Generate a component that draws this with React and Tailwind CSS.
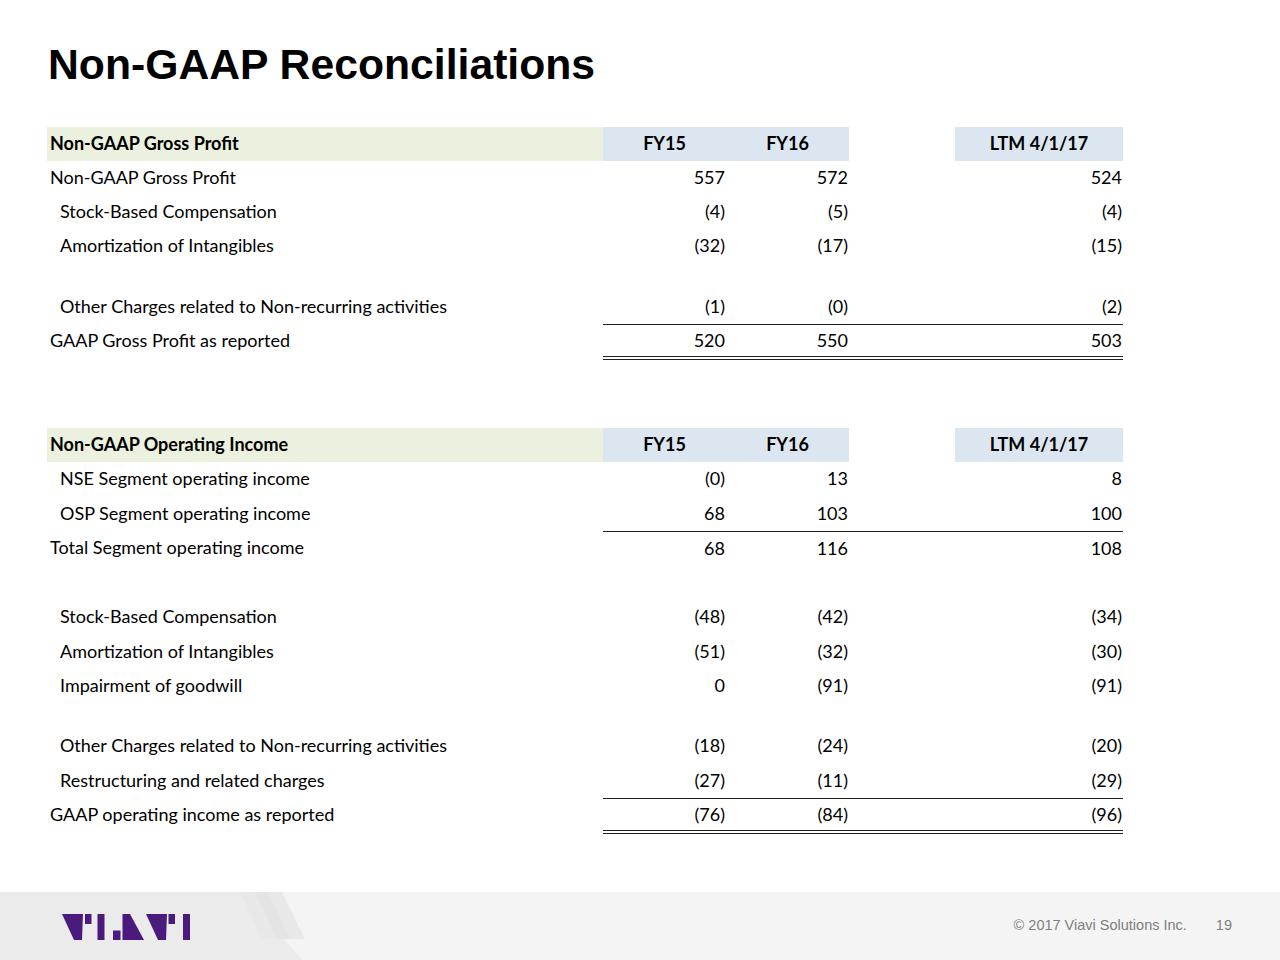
import React from "react";

const T1 = [
  { type: "row", label: "Non-GAAP Gross Profit", indent: false, v: ["557", "572", "524"] },
  { type: "row", label: "Stock-Based Compensation", indent: true, v: ["(4)", "(5)", "(4)"] },
  { type: "row", label: "Amortization of Intangibles", indent: true, v: ["(32)", "(17)", "(15)"] },
  { type: "spacer", h: "h-[27px]" },
  { type: "row", label: "Other Charges related to Non-recurring activities", indent: true, v: ["(1)", "(0)", "(2)"] },
  { type: "row", label: "GAAP Gross Profit as reported", indent: false, v: ["520", "550", "503"], top: true, dbl: true },
];

const T2 = [
  { type: "row", label: "NSE Segment operating income", indent: true, v: ["(0)", "13", "8"] },
  { type: "row", label: "OSP Segment operating income", indent: true, v: ["68", "103", "100"] },
  { type: "row", label: "Total Segment operating income", indent: false, v: ["68", "116", "108"], top: true },
  { type: "spacer", h: "h-[34.5px]" },
  { type: "row", label: "Stock-Based Compensation", indent: true, v: ["(48)", "(42)", "(34)"] },
  { type: "row", label: "Amortization of Intangibles", indent: true, v: ["(51)", "(32)", "(30)"] },
  { type: "row", label: "Impairment of goodwill", indent: true, v: ["0", "(91)", "(91)"] },
  { type: "spacer", h: "h-[25.5px]" },
  { type: "row", label: "Other Charges related to Non-recurring activities", indent: true, v: ["(18)", "(24)", "(20)"] },
  { type: "row", label: "Restructuring and related charges", indent: true, v: ["(27)", "(11)", "(29)"] },
  { type: "row", label: "GAAP operating income as reported", indent: false, v: ["(76)", "(84)", "(96)"], top: true, dbl: true },
];

function Header({ title }) {
  return (
    <div className="flex h-[34px] font-bold">
      <div className="flex w-[556px] items-center bg-[#ebf1de] pl-[3px]">{title}</div>
      <div className="flex w-[123px] items-center justify-center bg-[#dce6f1]">FY15</div>
      <div className="flex w-[123px] items-center justify-center bg-[#dce6f1]">FY16</div>
      <div className="w-[106px]" />
      <div className="flex w-[168px] items-center justify-center bg-[#dce6f1]">LTM 4/1/17</div>
    </div>
  );
}

function Row({ r, h }) {
  const numCls =
    "flex w-[520px] items-stretch " +
    (r.top ? "border-t border-[#222] " : "") +
    (r.dbl ? "border-b-4 border-double border-b-[#222] " : "");
  return (
    <div className={"flex items-start " + h}>
      <div className={"flex h-full w-[556px] items-center " + (r.indent ? "pl-[13px]" : "pl-[3px]")}>
        {r.label}
      </div>
      <div className={numCls + (r.dbl ? "h-[calc(100%+2px)]" : "h-full")}>
        <div className="flex w-[123px] items-center justify-end pr-[1px]">{r.v[0]}</div>
        <div className="flex w-[123px] items-center justify-end pr-[1px]">{r.v[1]}</div>
        <div className="w-[106px]" />
        <div className="flex w-[168px] items-center justify-end pr-[1px]">{r.v[2]}</div>
      </div>
    </div>
  );
}

function Table({ title, rows, h }) {
  return (
    <div className="flex flex-col">
      <Header title={title} />
      {rows.map((r, i) =>
        r.type === "spacer" ? <div key={i} className={r.h} /> : <Row key={i} r={r} h={h} />
      )}
    </div>
  );
}

function Logo() {
  return (
    <svg width="128" height="26" viewBox="0 0 128 26" className="block">
      <g fill="#4a1a7d">
        <polygon points="0,0 21,0 20,26 12,26" />
        <rect x="23" y="0" width="6.5" height="10" />
        <rect x="35.5" y="0" width="7" height="26" />
        <rect x="51" y="16.5" width="7.5" height="9.5" />
        <polygon points="60.5,0 68,0 82,26 60.5,26" />
        <polygon points="84,0 105,0 104,26 96,26" />
        <rect x="106.5" y="0" width="6.5" height="10" />
        <rect x="121" y="0" width="7" height="26" />
      </g>
    </svg>
  );
}

export default function App() {
  return (
    <div className="relative flex h-[960px] w-[1280px] flex-col overflow-hidden bg-white text-black">
      <div className="pl-[48px] pt-[43px]">
        <h1 className="text-[42.7px] font-bold leading-none [font-family:'Liberation_Sans',Arial,sans-serif]">
          Non-GAAP Reconciliations
        </h1>
      </div>
      <div className="mt-[41px] pl-[47px] text-[18px] [font-family:Lato,'Open_Sans',sans-serif]">
        <Table title="Non-GAAP Gross Profit" rows={T1} h="h-[34px]" />
        <div className="h-[70px]" />
        <Table title="Non-GAAP Operating Income" rows={T2} h="h-[34.5px]" />
      </div>
      <footer className="relative mt-auto h-[68px] bg-[#f4f4f4]">
        <svg className="absolute inset-0" width="1280" height="68" viewBox="0 0 1280 68">
          <polygon points="0,0 240,0 303,68 0,68" fill="#ebebeb" />
          <polygon points="240,0 282,0 305,47 262,47" fill="#e8e8e8" />
          <polygon points="255,0 268,0 290,47 277,47" fill="#e4e4e4" />
        </svg>
        <div className="relative flex h-full items-center pl-[62px] pr-[48px] [font-family:'Liberation_Sans',Arial,sans-serif]">
          <div className="mt-[2px]">
            <Logo />
          </div>
          <div className="ml-auto text-[14.5px] text-[#7f7f7f]">© 2017 Viavi Solutions Inc.</div>
          <div className="ml-[29px] text-[14.5px] text-[#7f7f7f]">19</div>
        </div>
      </footer>
    </div>
  );
}
